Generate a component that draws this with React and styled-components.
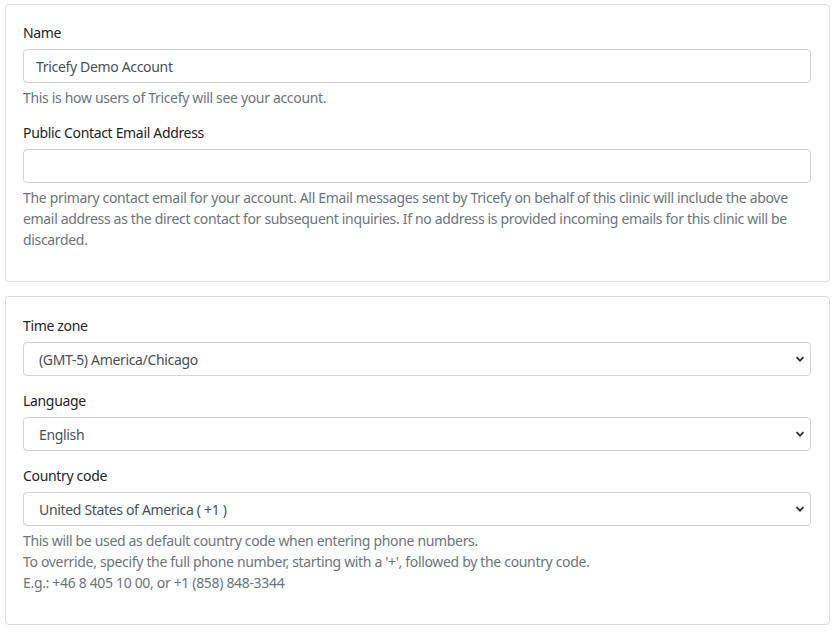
import styled, { createGlobalStyle } from 'styled-components';

const GlobalStyle = createGlobalStyle`
  * {
    box-sizing: border-box;
  }

  body {
    margin: 0;
    background: #ffffff;
    font-family: 'Noto Sans', 'Open Sans', sans-serif;
    font-size: 14px;
    letter-spacing: -0.33px;
    color: #212529;
  }
`;

const Page = styled.div`
  padding: 4px 4px 0 5px;
  display: flex;
  flex-direction: column;
  gap: 14px;
`;

const Card = styled.section`
  border: 1px solid #dfdfdf;
  border-radius: 4px;
  padding: ${({ $top }) => $top || 17}px 18px 17px 17px;
  background: #ffffff;
`;

const Group = styled.div`
  margin-bottom: ${({ $gap }) => $gap ?? 14}px;
`;

const Label = styled.label`
  display: block;
  line-height: 21px;
  margin-bottom: 6px;
  color: #212529;
`;

const Input = styled.input`
  display: block;
  width: 100%;
  height: 34px;
  padding: 0 12px;
  border: 1px solid #ced4da;
  border-radius: 4px;
  font: inherit;
  letter-spacing: inherit;
  color: #495057;
  outline: none;
`;

const SelectWrap = styled.div`
  position: relative;
`;

const Select = styled.select`
  display: block;
  width: 100%;
  height: 34px;
  padding: 0 30px 0 15px;
  border: 1px solid #ced4da;
  border-radius: 4px;
  font: inherit;
  letter-spacing: inherit;
  color: #495057;
  background: #ffffff;
  appearance: none;
  outline: none;
`;

const Chevron = styled.svg`
  position: absolute;
  right: 6px;
  top: 12px;
  width: 10px;
  height: 10px;
  pointer-events: none;
`;

const Help = styled.div`
  margin-top: 4px;
  line-height: 21px;
  color: #6c757d;
`;

function Dropdown({ value }) {
  return (
    <SelectWrap>
      <Select defaultValue={value}>
        <option>{value}</option>
      </Select>
      <Chevron viewBox="0 0 10 10">
        <path d="M1.5 3.2 L5 6.7 L8.5 3.2" fill="none" stroke="#333" strokeWidth="1.9" />
      </Chevron>
    </SelectWrap>
  );
}

export default function App() {
  return (
    <>
      <GlobalStyle />
      <Page>
        <Card>
          <Group>
            <Label>Name</Label>
            <Input type="text" defaultValue="Tricefy Demo Account" />
            <Help>This is how users of Tricefy will see your account.</Help>
          </Group>
          <Group>
            <Label>Public Contact Email Address</Label>
            <Input type="email" />
            <Help>
              The primary contact email for your account. All Email messages sent by Tricefy on behalf
              of this clinic will include the above email address as the direct contact for subsequent
              inquiries. If no address is provided incoming emails for this clinic will be discarded.
            </Help>
          </Group>
        </Card>
        <Card $top={18}>
          <Group $gap={14}>
            <Label>Time zone</Label>
            <Dropdown value="(GMT-5) America/Chicago" />
          </Group>
          <Group $gap={14}>
            <Label>Language</Label>
            <Dropdown value="English" />
          </Group>
          <Group>
            <Label>Country code</Label>
            <Dropdown value="United States of America ( +1 )" />
            <Help>
              This will be used as default country code when entering phone numbers.
              <br />
              To override, specify the full phone number, starting with a '+', followed by the country code.
              <br />
              E.g.: +46 8 405 10 00, or +1 (858) 848-3344
            </Help>
          </Group>
        </Card>
      </Page>
    </>
  );
}
